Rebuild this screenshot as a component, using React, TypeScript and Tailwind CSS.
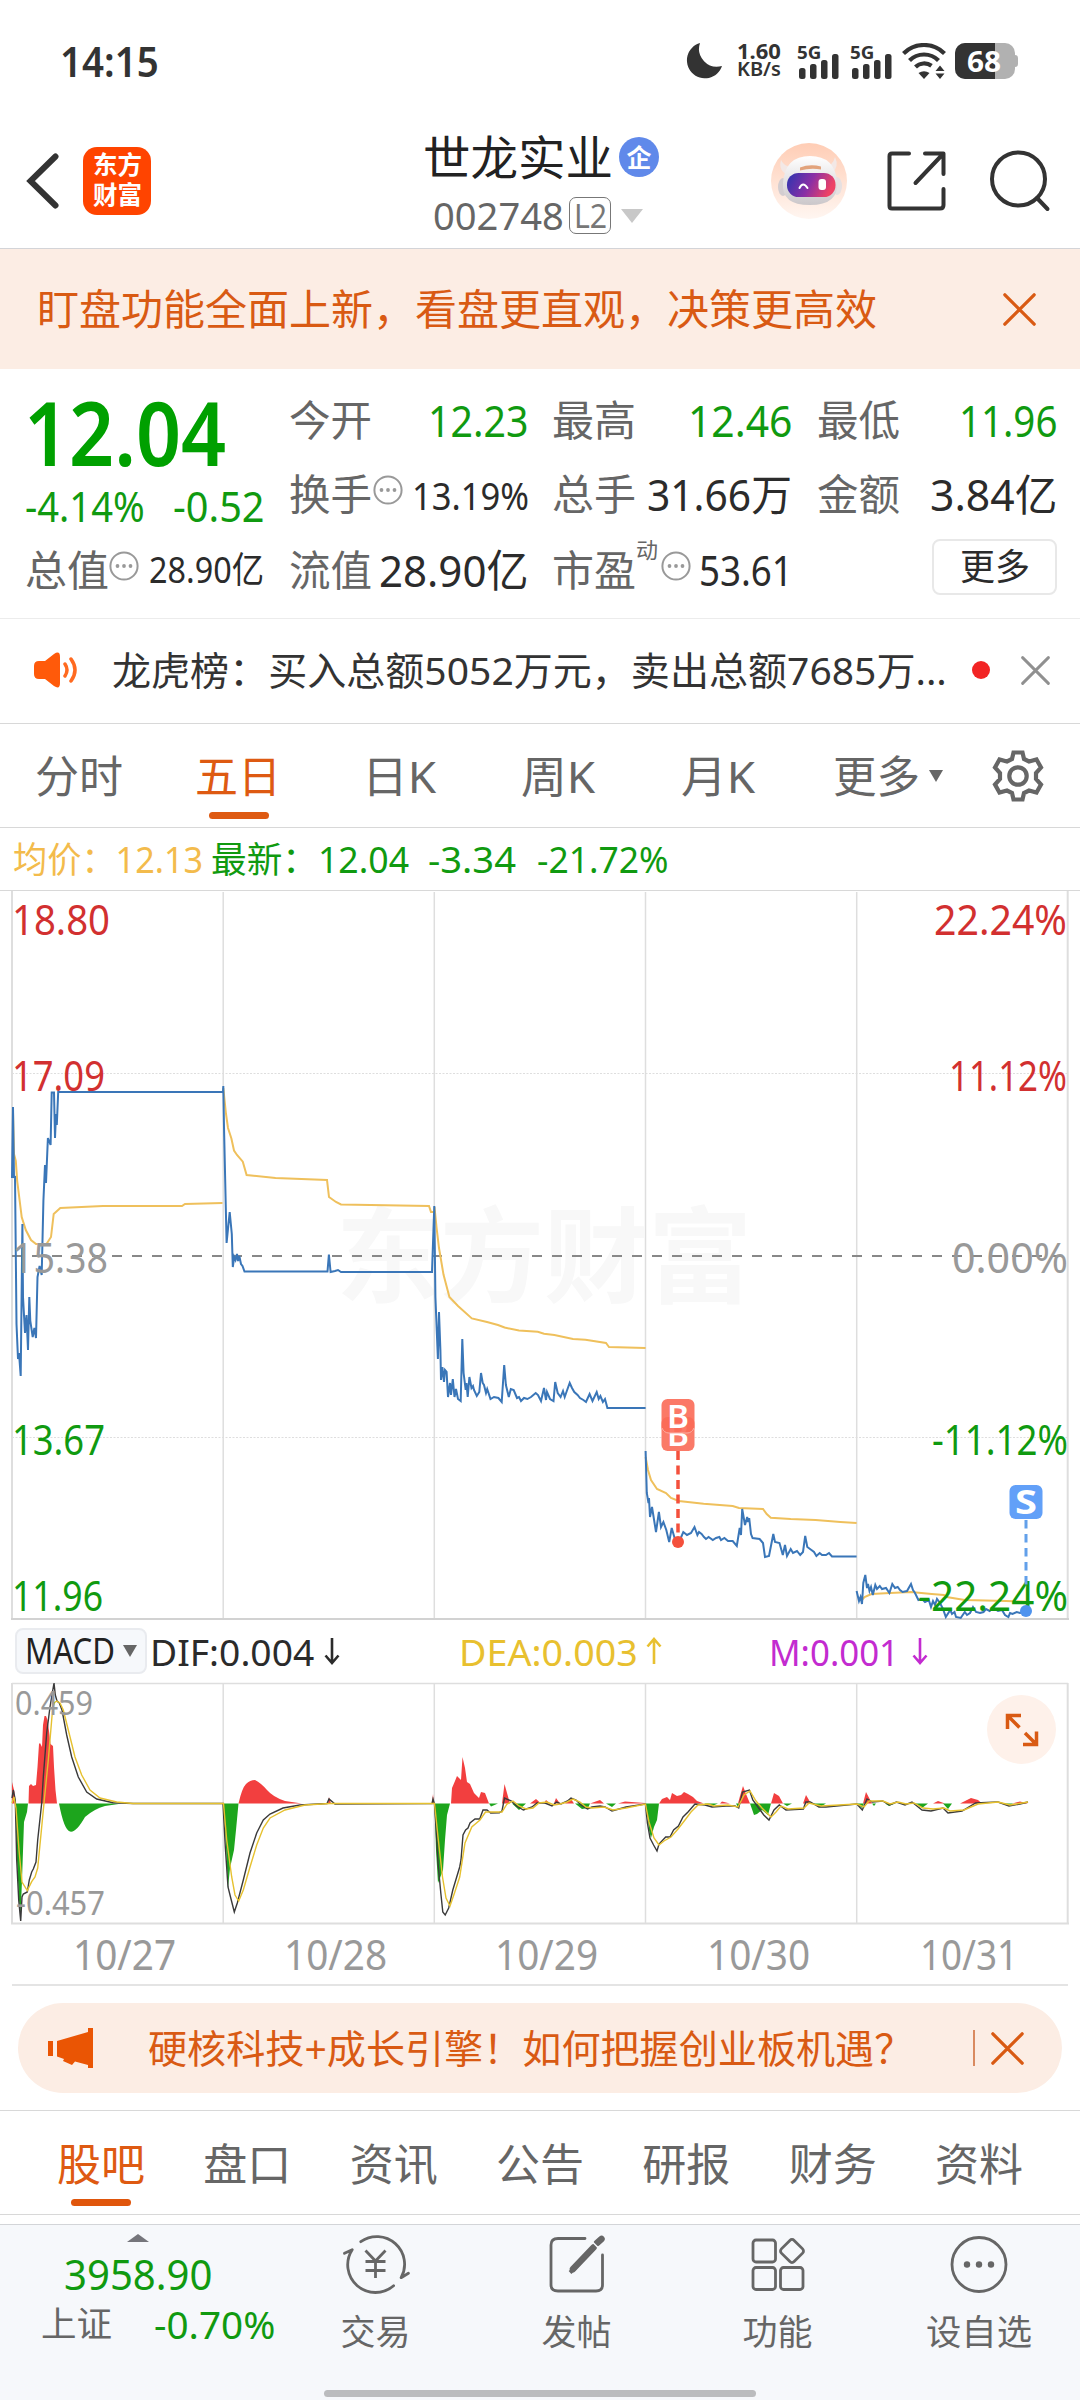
import React, { useLayoutEffect, useRef, useState } from 'react';

/** One line of text stretched or condensed to the width of its box. */
function Fit({ children, className = '' }: { children: React.ReactNode; className?: string }) {
  const box = useRef<HTMLDivElement>(null);
  const text = useRef<HTMLSpanElement>(null);
  const [scale, setScale] = useState(1);
  useLayoutEffect(() => {
    if (box.current && text.current && text.current.offsetWidth > 0) {
      setScale(box.current.clientWidth / text.current.offsetWidth);
    }
  }, [children]);
  return (
    <div ref={box} className={`shrink-0 whitespace-nowrap leading-none ${className}`}>
      <span ref={text} className="inline-block origin-left" style={{ transform: `scaleX(${scale})` }}>
        {children}
      </span>
    </div>
  );
}

function Cross({ className }: { className: string }) {
  return (
    <svg viewBox="0 0 32 32" className={className} fill="none" stroke="currentColor" strokeWidth="3.200" strokeLinecap="round">
      <path d="M1.8 1.8 30.2 30.2M30.2 1.8 1.8 30.2" />
    </svg>
  );
}

function Dots({ className = '' }: { className?: string }) {
  return (
    <svg viewBox="0 0 30 30" className={`relative -top-[4px] size-[30px] shrink-0 text-[#999] ${className}`} fill="none" stroke="currentColor" strokeWidth="2">
      <circle cx="15" cy="15" r="13.6" />
      <g fill="currentColor" stroke="none">
        <circle cx="8.5" cy="15" r="1.9" />
        <circle cx="15" cy="15" r="1.9" />
        <circle cx="21.5" cy="15" r="1.9" />
      </g>
    </svg>
  );
}

function Signal() {
  return (
    <div className="flex h-[36px] w-[42px] flex-col justify-between">
      <Fit className="h-[14px] w-[24px] text-[18px] font-bold leading-[14px]">5G</Fit>
      <svg viewBox="0 0 40 25" className="-mt-[4px] ml-[2px] h-[25px] w-[40px]" fill="#333">
        <rect x="0" y="14" width="6.5" height="11" rx="2.5" />
        <rect x="11" y="10" width="6.5" height="15" rx="2.5" />
        <rect x="22" y="6" width="6.5" height="19" rx="2.5" />
        <rect x="33" y="0" width="6.5" height="25" rx="2.5" />
      </svg>
    </div>
  );
}

function StatusBar() {
  return (
    <div className="flex h-[90px] items-center pl-[60px] pt-[31px] text-[#333]">
      <Fit className="w-[99px] text-[42px] font-semibold">14:15</Fit>
      <svg viewBox="0 0 36 36" className="ml-[527px] size-[36px]" fill="#333">
        <path d="M14 0A18 18 0 1 0 36 23 18 18 0 0 1 14 0Z" />
      </svg>
      <div className="ml-[15px] flex flex-col">
        <Fit className="h-[18px] w-[44px] text-[21px] font-bold leading-[18px]">1.60</Fit>
        <Fit className="h-[21px] w-[44px] text-[20px] font-semibold leading-[23px]">KB/s</Fit>
      </div>
      <div className="ml-[16px]"><Signal /></div>
      <div className="ml-[11px]"><Signal /></div>
      <svg viewBox="0 0 44 36" className="ml-[10px] h-[36px] w-[44px]" fill="none" stroke="#333" strokeWidth="4.2">
        <path d="M1.5 10.5a29 29 0 0 1 41 0" />
        <path d="M7.5 17.5a20.5 20.5 0 0 1 29 0" />
        <path d="M13.5 24a12.5 12.5 0 0 1 16-1.200" />
        <path d="M16.500 30q5.500-3.600 11 0L22 36Z" fill="#333" stroke="none" />
        <path d="M33.500 28h9L38 22.500ZM33.500 30.500h9L38 36Z" fill="#333" stroke="none" />
      </svg>
      <div className="relative ml-[9px] flex h-[36px] w-[60px] items-center overflow-hidden rounded-[10px] bg-[#b1b1b1]">
        <div className="h-full w-[40px] bg-[#333]" />
        <div className="absolute inset-0 flex items-center pl-[12px]">
          <Fit className="w-[34px] text-[28px] font-bold text-white">68</Fit>
        </div>
      </div>
      <div className="h-[12px] w-[3px] rounded-r-[3px] bg-[#b1b1b1]" />
    </div>
  );
}

function Robot() {
  return (
    <svg viewBox="0 0 76 76" className="size-[76px]">
      <defs>
        <linearGradient id="halo" x1="0" y1="0" x2="0" y2="1">
          <stop offset="0" stopColor="#ffcdb5" />
          <stop offset="1" stopColor="#fff6f1" />
        </linearGradient>
        <linearGradient id="visor" x1="0" y1="0" x2="1" y2="0.250">
          <stop offset="0" stopColor="#2b35b0" />
          <stop offset="0.550" stopColor="#8a2fa5" />
          <stop offset="1" stopColor="#ee4266" />
        </linearGradient>
        <linearGradient id="helmet" x1="0" y1="0" x2="0" y2="1">
          <stop offset="0" stopColor="#ffffff" />
          <stop offset="1" stopColor="#cbc7ca" />
        </linearGradient>
      </defs>
      <circle cx="38" cy="38" r="38" fill="url(#halo)" />
      <path d="M10 17q-3 11 7 15l6-8q-9 1-13-7ZM64 14q5 10-4 17l-7-7q9-1 11-10Z" fill="#f3e8e6" />
      <ellipse cx="12" cy="44" rx="5" ry="9" fill="#d3cdd0" />
      <ellipse cx="66" cy="43" rx="5" ry="9" fill="#e6e0e1" />
      <path d="M12 40Q14 13 39 13T66 39Q68 62 39 62T12 40Z" fill="url(#helmet)" />
      <path d="M29 24.500q10-4 21-1v3q-10-2-21 1Z" fill="#e2a37c" />
      <rect x="16" y="30" width="48.500" height="24" rx="11.500" fill="url(#visor)" />
      <path d="M28.500 45q3.500-7 8 0" fill="none" stroke="#fff" strokeWidth="2" strokeLinecap="round" />
      <rect x="47.500" y="36" width="7.500" height="11" rx="3" fill="#fff" />
    </svg>
  );
}

function Header() {
  return (
    <div className="flex h-[159px] items-center border-b border-[#d3d4d8] pl-[26px] pt-[24px]">
      <svg viewBox="0 0 33 56" className="h-[56px] w-[33px]" fill="none" stroke="#333" strokeWidth="6" strokeLinecap="round">
        <path d="M29.500 3.500 4.500 28 29.500 52.500" />
      </svg>
      <div className="ml-[24px] flex h-[68px] w-[68px] flex-col items-center justify-center rounded-[14px] bg-[#ff4400] text-[25px] font-bold text-white">
        <Fit className="h-[30px] w-[49px] leading-[28px]">东方</Fit>
        <Fit className="h-[28px] w-[49px] leading-[28px]">财富</Fit>
      </div>
      <div className="ml-[272px] flex h-[134px] w-[240px] flex-col">
        <div className="flex h-[86px] items-center">
          <Fit className="w-[190px] text-[47px] text-[#222]">世龙实业</Fit>
          <div className="ml-[6px] flex size-[40px] items-center justify-center rounded-full bg-[#6089ea] text-[25px] font-bold leading-none text-white">企</div>
        </div>
        <div className="flex h-[31px] items-center pl-[10px]">
          <Fit className="-mt-[2px] w-[131px] text-[39px] text-[#666]">002748</Fit>
          <div className="ml-[5px] flex h-[37px] w-[42px] items-center justify-center rounded-[7px] border-[1.5px] border-[#777]">
            <Fit className="w-[33px] text-[33px] text-[#777]">L2</Fit>
          </div>
          <div className="ml-[10px] h-0 w-0 border-x-[11px] border-t-[14px] border-x-transparent border-t-[#c8c8c8]" />
        </div>
      </div>
      <div className="ml-[108px]"><Robot /></div>
      <svg viewBox="0 0 60 60" className="ml-[40px] size-[60px]" fill="none" stroke="#333" strokeWidth="4" strokeLinecap="round" strokeLinejoin="round">
        <path d="M22 2.500H5Q2.500 2.500 2.500 5V55Q2.500 57.500 5 57.500H53Q56.500 57.500 56.500 54V38M38 2.500H56.500V23M56 3 28.500 32" />
      </svg>
      <svg viewBox="0 0 62 62" className="ml-[42px] size-[62px]" fill="none" stroke="#333" strokeWidth="4" strokeLinecap="round">
        <circle cx="29.500" cy="29" r="26.500" />
        <path d="M48 48 58.500 59" />
      </svg>
    </div>
  );
}

function Quote() {
  const label = 'text-[42px] text-[#666]';
  return (
    <div className="flex h-[250px] border-b border-[#ececec] pl-[26px] text-[#2b2b2b]">
      <div className="flex w-[240px] flex-col pt-[18px]">
        <div className="flex h-[88px] items-center">
          <Fit className="-ml-[2px] w-[202px] text-[89px] font-semibold text-[#00a000]">12.04</Fit>
        </div>
        <div className="mt-[2px] flex h-[58px] items-center justify-between text-[#109a10]">
          <Fit className="-ml-[1px] w-[120px] text-[41px]">-4.14%</Fit>
          <Fit className="mr-[1px] w-[92px] text-[41px]">-0.52</Fit>
        </div>
        <div className="flex h-[70px] items-center">
          <Fit className={`-ml-px w-[84px] ${label}`}>总值</Fit>
          <Dots />
          <Fit className="ml-[10px] w-[115px] text-[36px]">28.90亿</Fit>
        </div>
      </div>
      <div className="ml-[23px] flex w-[239px] flex-col pt-[13px]">
        <div className="flex h-[75px] items-center justify-between">
          <Fit className={`w-[83px] ${label}`}>今开</Fit>
          <Fit className="w-[100px] text-[44px] text-[#109a10]">12.23</Fit>
        </div>
        <div className="flex h-[74px] items-center">
          <Fit className={`w-[83px] ${label}`}>换手</Fit>
          <Dots className="ml-[1px]" />
          <Fit className="ml-[9px] w-[117px] text-[39px]">13.19%</Fit>
        </div>
        <div className="flex h-[78px] items-center justify-between">
          <Fit className={`w-[83px] ${label}`}>流值</Fit>
          <Fit className="w-[149px] text-[44px]">28.90亿</Fit>
        </div>
      </div>
      <div className="ml-[24px] flex w-[240px] flex-col pt-[13px]">
        <div className="flex h-[75px] items-center justify-between">
          <Fit className={`w-[84px] ${label}`}>最高</Fit>
          <Fit className="w-[104px] text-[44px] text-[#109a10]">12.46</Fit>
        </div>
        <div className="flex h-[74px] items-center justify-between">
          <Fit className={`w-[84px] ${label}`}>总手</Fit>
          <Fit className="w-[145px] text-[43px]">31.66万</Fit>
        </div>
        <div className="flex h-[78px] items-center">
          <Fit className={`w-[84px] ${label}`}>市盈</Fit>
          <Fit className="relative -top-[21px] w-[22px] text-[22px] text-[#666]">动</Fit>
          <Dots className="ml-[3px]" />
          <Fit className="ml-[8px] w-[94px] text-[41px]">53.61</Fit>
        </div>
      </div>
      <div className="ml-[25px] flex w-[240px] flex-col pt-[13px]">
        <div className="flex h-[75px] items-center justify-between">
          <Fit className={`w-[83px] ${label}`}>最低</Fit>
          <Fit className="w-[98px] text-[44px] text-[#109a10]">11.96</Fit>
        </div>
        <div className="flex h-[74px] items-center justify-between">
          <Fit className={`w-[83px] ${label}`}>金额</Fit>
          <Fit className="w-[127px] text-[43px]">3.84亿</Fit>
        </div>
        <div className="flex h-[78px] items-center justify-end">
          <div className="-mt-[6px] flex h-[56px] w-[125px] items-center justify-center rounded-[8px] border-2 border-[#e8e8e8]">
            <Fit className="w-[70px] text-[36px]">更多</Fit>
          </div>
        </div>
      </div>
    </div>
  );
}

function News() {
  return (
    <div className="flex h-[105px] items-center border-b border-[#d8d8d8] pl-[33px]">
      <svg viewBox="0 0 46 36" className="-mt-[2px] h-[36px] w-[46px]" fill="#ff5a0a">
        <path d="M1 14Q1 9 6 9H12L21 2Q27-2 27 5V31Q27 38 21 34L12 27H6Q1 27 1 22Z" />
        <path d="M32 12q4 6 0 12M38 7q8 11 0 22" fill="none" stroke="#ff6a20" strokeWidth="3.500" strokeLinecap="round" />
      </svg>
      <Fit className="-mt-[3px] ml-[33px] w-[835px] text-[39px] text-[#333]">龙虎榜：买入总额5052万元，卖出总额7685万...</Fit>
      <div className="-mt-[2px] ml-[25px] size-[18px] rounded-full bg-[#f22424]" />
      <Cross className="-mt-[2px] ml-[31px] size-[29px] text-[#909090]" />
    </div>
  );
}

function PeriodTabs() {
  return (
    <div className="flex h-[104px] items-center border-b border-[#d8d8d8] pl-[35px] text-[44px] text-[#666]">
      <Fit className="w-[88px]">分时</Fit>
      <div className="relative ml-[72px] text-[#de5a12]">
        <Fit className="w-[86px]">五日</Fit>
        <div className="absolute -bottom-[21px] left-[14px] h-[7px] w-[60px] rounded-full bg-[#de5a12]" />
      </div>
      <Fit className="ml-[81px] w-[74px]">日K</Fit>
      <Fit className="ml-[85px] w-[74px]">周K</Fit>
      <Fit className="ml-[86px] w-[74px]">月K</Fit>
      <Fit className="ml-[78px] w-[87px]">更多</Fit>
      <div className="ml-[9px] h-0 w-0 border-x-[7.5px] border-t-[12px] border-x-transparent border-t-[#666]" />
      <svg viewBox="-26 -26 52 52" className="ml-[49px] size-[52px]" fill="none" stroke="#666" strokeWidth="4.200">
        <circle r="8.700" />
        <path d="M-4.500-23.500H4.500L6-17 11-14.500 18.500-16.500 23-8.500 18-3V3L23 8.500 18.500 16.500 11 14.500 6 17 4.500 23.500H-4.500L-6 17-11 14.500-18.500 16.500-23 8.500-18 3V-3L-23-8.500-18.500-16.500-11-14.500-6-17Z" />
      </svg>
    </div>
  );
}

function Averages() {
  return (
    <div className="flex h-[63px] items-center border-b border-[#d8d8d8] pl-[13px] pt-[2px] text-[36px] text-[#109a10]">
      <Fit className="w-[190px] text-[#f3bb4c]">均价：12.13</Fit>
      <Fit className="ml-[8px] w-[198px]">最新：12.04</Fit>
      <Fit className="ml-[19px] w-[88px]">-3.34</Fit>
      <Fit className="ml-[21px] w-[132px]">-21.72%</Fit>
    </div>
  );
}

const price = [
  '12,1178 13,1107 14,1178 15,1176 16.5,1324 18,1359 19,1353 20.7,1376 22.4,1224 23,1297 25,1333 26.5,1315 28,1350 29.3,1297 30.3,1321 32.7,1337 34.4,1328 36,1338 37.5,1277 39.6,1266 41.7,1275 43.4,1201 45,1165 46,1183 47.9,1138 50.6,1145 51.7,1092.5 54,1092.5 55,1138 56,1114 56.8,1125 58.2,1092 223,1092 223.3,1086 224,1127 226.6,1243 229.7,1212 231.8,1234 232.8,1267 234.2,1257 235.5,1260 237,1254 238,1261 239.3,1256 241,1264 242.5,1266 244.5,1271.5 327.5,1271.5 328.9,1254.5 330.6,1272 335,1271 338,1270 341,1272 432,1272 433,1243 434.3,1206 435.4,1297 437.9,1359 439,1312 440.4,1350 441,1380 442.4,1367 444,1382 445,1370 446.6,1372 448,1397 450,1383 451,1395 452.8,1379 454.5,1397 456,1389 458,1399 460.7,1401 462.3,1339 463.6,1373 465.7,1390 466.500,1383 467.7,1397 469.4,1377 471.5,1388 473,1386 474,1390 476.8,1396 479.3,1392 481,1373 482.7,1383 484,1385 486,1393 487.2,1389 490.5,1399 494,1397 498.4,1398 501.7,1402 504.2,1365 505.9,1385 508.8,1397 510.8,1389 513.7,1390 517,1398 519,1397 521,1401 524,1398 527.4,1399 531,1397 535.7,1393 538,1395 541,1401 544,1388 546,1400 547,1392 550,1399 553.5,1401 555.2,1382 557.7,1393 560.6,1397 563,1391 564.7,1397 566.8,1391 569.7,1383 572,1388 574.3,1392 577.6,1395 580,1398 583.4,1400 586,1402 589.6,1394 592.5,1401 596.7,1392 598.7,1399 600.4,1396 602.9,1402 605,1399 607.4,1408 645.6,1408',
  '645.6,1451 646.8,1493 648.5,1503 649,1498 650,1517 652,1507 656,1532 658.9,1512 661,1527 663.4,1522 666.3,1530 669.2,1542 671.7,1528 674.6,1538 678,1542 680.8,1538 683.3,1532 687,1535 691,1533 694.5,1527 697.4,1535 699,1532 701.6,1534 704,1537 706,1539 708.6,1537 712.8,1540 716,1538 719.4,1537 721,1540 724.4,1538 728,1541 732.7,1541 736.8,1546 739.7,1528 741,1535 742.2,1509 745,1525 747.2,1517 748,1522 749.2,1518 751,1534 752.6,1538 759.6,1539 763,1543 765,1557 769,1556 773.3,1534 775,1542 779.5,1543 782.8,1555 785,1545 787,1556 790.7,1549 793,1553 797,1551 800.2,1555 803,1552 805.2,1536 807.3,1547 811.4,1550 814,1552 816.4,1556 819.7,1553 822,1555 826,1555 829,1553 832,1556.5 856.6,1556.5',
  '856.6,1591 859,1601 860.5,1597 862,1604 863.3,1583 865.3,1575 867,1588 868,1584 869.5,1591 871,1587 872.8,1595 875.3,1585 877,1589 879.8,1586 882,1589 886,1588 889.4,1593 892.3,1584 895,1588 897.7,1587 900,1590 902.6,1592 907,1591 911,1584 913,1590 915,1593 918.4,1600 922,1599 925,1602 928.8,1600 931,1607 933,1601 935,1605 937,1599 940,1603 943,1609 945.8,1617 950.3,1610 952,1614 954.5,1612 956,1617 960.7,1618 964.8,1612 967,1615 970,1613 973,1607 976,1612 980,1613 983.5,1612 986,1609 989.7,1611 993,1608 998,1611 1002,1610 1005,1615 1008.4,1617 1010,1613 1012.5,1614 1016.7,1612 1020,1613 1025.8,1611',
];

const average = [
  '13,1112 14,1154 15.8,1161 17.2,1181 21.7,1217 25.8,1230 31,1240 36,1244 46.5,1244 51,1237 53.7,1214 60.3,1208 103,1206 182,1206 185,1204 222.5,1203',
  '223.3,1088 226,1114 228,1128 231.4,1138.5 234,1150.5 237,1155 242.8,1161.7 246.6,1175 275.5,1178 327,1180 329,1197 336,1202 341,1204.5 429,1206 431,1212 434,1212',
  '434.5,1207 436.6,1228 439,1248 443.5,1274.6 449.4,1297 458,1306 471.8,1318.4 487,1322 498,1325 504.6,1327.500 519,1330.6 537.8,1331.7 544,1333.7 554.4,1335 573,1339 585.5,1339.7 606,1343 609,1347 645.6,1348',
  '645.6,1457 648,1470 651,1480 657,1489 666,1493 671,1498 678.8,1501 703.6,1503.7 732.7,1506 739,1508 763,1509 766.7,1514 770.8,1517.7 790.7,1519 815.6,1520 840.4,1522 856.6,1523',
  '861,1601 864.5,1597 871.5,1594 890,1593 911,1592 931.7,1594 944,1595 946.6,1597 964.8,1600 1006,1601 1025.8,1601.7',
];

type Mark = { t: string; x: number; y: number; w: number; c: string };
const axis: Mark[] = [
  { t: '18.80', x: 12, y: 934.5, w: 98, c: '#d23030' },
  { t: '17.09', x: 12, y: 1090.5, w: 93, c: '#d23030' },
  { t: '15.38', x: 12, y: 1272.5, w: 96, c: '#999' },
  { t: '13.67', x: 12, y: 1454.5, w: 93, c: '#109a10' },
  { t: '11.96', x: 12, y: 1610.5, w: 91, c: '#109a10' },
  { t: '22.24%', x: 934, y: 934.5, w: 133, c: '#d23030' },
  { t: '11.12%', x: 949, y: 1090.5, w: 118, c: '#d23030' },
  { t: '0.00%', x: 952, y: 1272.5, w: 116, c: '#999' },
  { t: '-11.12%', x: 932, y: 1454.5, w: 136, c: '#109a10' },
  { t: '-22.24%', x: 918, y: 1610.5, w: 150, c: '#109a10' },
];

function PriceChart() {
  return (
    <svg viewBox="0 891 1080 729" className="block h-[729px] w-[1080px]" fill="none">
      <text x="336" y="1295" fontSize="104" fontWeight="700" textLength="416" lengthAdjust="spacingAndGlyphs" fill="#f8f8f8">东方财富</text>
      <g stroke="#dedede" strokeWidth="1.500">
        <path d="M12 891V1619M1067.700 891V1619" strokeWidth="2" />
        <path d="M223.200 892V1619M434.300 892V1619M645.500 892V1619M856.700 892V1619" />
        <path d="M12 1073.500H1068M12 1437.500H1068" strokeWidth="1" strokeDasharray="2 1.500" />
        <path d="M11 1619H1069" stroke="#d2d2d2" strokeWidth="2" />
      </g>
      <path d="M12 1256H1068" stroke="#888" strokeWidth="1.800" strokeDasharray="10 10" />
      {average.map((p) => (
        <polyline key={p} points={p} stroke="#efc05c" strokeWidth="2" />
      ))}
      {price.map((p) => (
        <polyline key={p} points={p} stroke="#3a76b8" strokeWidth="2" />
      ))}
      <g stroke="#f4503c" strokeWidth="3.500">
        <path d="M678 1451V1540" strokeDasharray="9 5.500" />
        <circle cx="678" cy="1542" r="6" fill="#f4503c" stroke="none" />
      </g>
      <rect x="661.500" y="1417" width="33" height="34" rx="6" fill="#fa7a68" />
      <text x="667" y="1446" fontSize="33" fontWeight="600" textLength="22" lengthAdjust="spacingAndGlyphs" fill="#fff">B</text>
      <rect x="661.500" y="1399" width="33" height="34" rx="6" fill="#fb6a57" fillOpacity="0.900" />
      <path d="M662 1428q2 5 7 5h18q5 0 7-5" stroke="#fbb0a5" strokeWidth="1" />
      <text x="667" y="1428" fontSize="33" fontWeight="600" textLength="22" lengthAdjust="spacingAndGlyphs" fill="#fff">B</text>
      {axis.map((m) => (
        <text key={m.t + m.x} x={m.x} y={m.y} fontSize="41.500" textLength={m.w} lengthAdjust="spacingAndGlyphs" fill={m.c}>
          {m.t}
        </text>
      ))}
      <rect x="1009.500" y="1485" width="33" height="34" rx="6" fill="#62a0f8" />
      <text x="1015" y="1514" fontSize="34" fontWeight="700" textLength="22" lengthAdjust="spacingAndGlyphs" fill="#fff">S</text>
      <path d="M1026 1520V1585" stroke="#62a0ea" strokeWidth="3" strokeDasharray="8.500 5.500" />
      <circle cx="1026" cy="1611" r="6" fill="#4f93ee" />
    </svg>
  );
}

function Arrow({ className }: { className: string }) {
  return (
    <svg viewBox="0 0 16 28" className={`h-[28px] w-[16px] ${className}`} fill="none" stroke="currentColor" strokeWidth="2.600">
      <path d="M8 1V26M1.500 18.500 8 26 14.500 18.500" />
    </svg>
  );
}

function MacdLegend() {
  return (
    <div className="flex h-[62px] items-center pl-[15px] text-[37px]">
      <div className="flex h-[46px] w-[132px] items-center rounded-[8px] border-2 border-[#e9ebef] bg-[#f6f8fb] pl-[8px] text-[#222]">
        <Fit className="w-[90px] text-[36px]">MACD</Fit>
        <div className="ml-[8px] h-0 w-0 border-x-[7.5px] border-t-[12px] border-x-transparent border-t-[#666]" />
      </div>
      <Fit className="ml-[3px] w-[164px] text-[#2b2b2b]">DIF:0.004</Fit>
      <Arrow className="ml-[10px] text-[#2b2b2b]" />
      <Fit className="ml-[119px] w-[179px] text-[#e8c02f]">DEA:0.003</Fit>
      <Arrow className="ml-[8px] rotate-180 text-[#e8c02f]" />
      <Fit className="ml-[107px] w-[130px] text-[#c32bd0]">M:0.001</Fit>
      <Arrow className="ml-[13px] text-[#c32bd0]" />
    </div>
  );
}

const redBars = [
  'M12 1803.500V1782L13 1786 14.500 1792V1803.500Z',
  'M28.500 1803.500 29 1786 31 1784 33 1786 36 1785 37.500 1767 39 1744 40 1743 42 1747 43 1725 44.500 1716 46 1716 47.500 1720 49 1731 50.500 1744 53 1746 54 1767 55.500 1790 57 1803.500Z',
  'M238.500 1803.500Q242 1788 246 1784T255 1780Q261 1783 267 1790T285 1801L302 1803.500Z',
  'M328 1803.500 329 1797 331 1803.500ZM432 1803.500 433 1794 434 1803.500Z',
  'M451 1803.500 452 1788 455 1781 457 1776 461 1780 462.500 1757 465 1768 467 1782 470 1784 474 1793 479 1798 481 1792 485 1793 489 1803.500Z',
  'M502 1803.500 504.500 1784 507 1793 510 1803.500ZM530 1803.500 536 1799 541 1803.500ZM544 1803.500 546 1800 550 1803.500ZM554 1803.500 556 1798 560 1803.500ZM565 1803.500 571 1799 574 1803.500ZM590 1803.500 600 1800 604 1803.500ZM618 1803.500 625 1801.500 645 1803V1803.500Z',
  'M659 1803.500 662 1799 667 1797 670 1800 672 1793 677 1796 681 1795 684 1792 688 1794 693 1797 697 1801 704 1803.500ZM720 1803.500 722 1801.500 730 1803.500Z',
  'M738 1803.500 740 1796 743 1786 746 1794 750 1803.500ZM771 1803.500 774 1793 779 1796 783 1803.500ZM803 1803.500 806 1795 811 1803.500ZM863 1803.500 866 1792 872 1803.500ZM933 1803.500 938 1801 945 1803.500ZM960 1803.500 971 1798 978 1800 982 1803.500ZM1012 1803.500 1020 1801.500 1028 1803.500Z',
];

const greenBars = [
  'M15.500 1803.500 17 1860 19 1900 20.500 1918 22 1880 24 1822 27 1812 28 1803.500Z',
  'M59 1803.500Q64 1830 70 1831.500T85 1817Q94 1809 105 1806L122 1803.500Z',
  'M223.500 1803.500 226 1847 228 1888 230 1868 234 1850 236 1830 238.500 1803.500Z',
  'M434.500 1803.500 436 1850 438 1883 440 1878 443 1870 445 1840 447 1815 450 1803.500Z',
  'M489 1803.500 491 1806.500 498 1803.500ZM512 1803.500 519 1810 526 1803.500ZM575 1803.500 582 1809 588 1808 590 1803.500ZM606 1803.500 612 1807 616 1803.500Z',
  'M646 1803.500 649 1830 651 1838 654 1827 657 1820 659 1803.500ZM704 1803.500 712 1806 718 1803.500ZM736 1803.500 738 1807 740 1803.500ZM750 1803.500 754 1815 757 1814 762 1810 768 1815 771 1803.500ZM783 1803.500 787 1806 792 1803.500ZM812 1803.500 820 1807 826 1803.500Z',
  'M857 1803.500 862 1808 864 1803.500ZM872 1803.500 874 1806 876 1803.500ZM885 1803.500 889 1806 895 1803.500ZM915 1803.500 922 1808 928 1803.500ZM943 1803.500 948 1809 952 1803.500ZM1003 1803.500 1009 1806 1013 1803.500Z',
];

const calm =
  '545,1803 552,1806 556.5,1802 561,1804 567.5,1801 571,1798 576,1800 581,1805 587.5,1809 592,1807 600,1806 605,1807 612,1811 626,1807 645.4,1804';

const calmTail =
  '712,1807 726,1806 735,1806 738.7,1808 742.5,1792 749.4,1790 752.8,1800 758.7,1808 763.8,1815 769,1820 774,1810 779.3,1805 786,1810 803.4,1809 805.8,1802 810.3,1802 819,1807 826,1807 856.8,1804 862.3,1810 867,1799 872.3,1802 882.6,1801 889.5,1805 896.4,1802 905,1805 912,1802 922,1810 931,1811 943,1808 948,1813 962,1811 975.6,1803 998,1802 1009,1806 1020,1804 1028,1802';

const dif =
  '12,1798 13.3,1790 15.3,1800 16.7,1860 18.7,1900 20.7,1921 22,1897 23.3,1894 27.3,1892 29.3,1880 31.7,1872 33.3,1869 36,1862 37.7,1840 41.7,1803 43.3,1777 46.7,1733 50,1707 52.3,1693 54,1683 55.3,1695 57,1701 59.3,1703 62,1710 66.7,1735 71.7,1757 78.3,1777 86.7,1792 96.7,1799 113,1802.7 133,1803.5 223,1803.5 225.3,1847 228,1887 230,1895 234.3,1912 237.3,1903 243.3,1880 250,1853 256.7,1833 263.3,1820 270,1814 283,1808 300,1805 327,1803.5 329,1799 335,1804 432,1803.5 433,1799 434.5,1804 436,1827 438,1863 440.8,1893 442.8,1912 445.2,1915 448.7,1908 452.8,1890 459.7,1867 461,1860 463,1835 465.6,1830 468,1828 470,1823 475,1819 479.700,1819 483,1810 487,1810 490.7,1813 499.3,1812.7 502,1811 504.5,1798 511.4,1801 516.5,1806 523.4,1810 532,1807 537,1803 ' +
  calm +
  ' 647.4,1823 650,1838 653.6,1845 657,1851 659,1844 665.7,1837 670,1837 673.6,1830 678.4,1826 683,1817 688,1812 695,1804 705,1805 ' +
  calmTail;

const dea =
  '12,1803 14,1797 16,1808 19,1850 22,1882 27.3,1890.5 31.7,1881.7 35,1877 37.7,1868 41.7,1827 44.3,1800 48.3,1760 52.7,1708 54.3,1702.7 56.7,1701 60,1703 63.3,1710 68.3,1730 75,1757 81.7,1775 90,1790 100,1798 116.7,1802 133,1803.5 223.5,1803.5 226.7,1840 231.7,1877 235,1895 238.7,1901 243.3,1890 250,1867 256.7,1845 263.3,1828 270,1818 285,1810 305,1805 330,1803.5 434.5,1803.5 438,1837 442.5,1877 446,1898 450,1906 454.5,1893 459.7,1877 465,1843 471.8,1827 480,1820 485.5,1812 493,1812 502,1812 507,1804 513,1801 519,1806 526,1809 533,1808 539,1803 547,1802 554,1805 560,1804 567,1802 573,1799 580,1802 586,1807 592,1808 604,1807 613,1810 626,1808 645.4,1804 649,1822 654,1838 659,1845 664,1841 671,1837 678,1829 685,1820 691,1812 698,1805 708,1804 714,1806 728,1805 738,1807 744,1795 750,1791 756,1801 762,1808 771,1817 776,1812 781,1806 788,1809 804,1808 809,1803 821,1806 857,1804 864,1807 869,1801 883,1801 890,1804 898,1802 906,1804 914,1803 923,1808 933,1809 944,1808 950,1811 964,1810 978,1804 998,1802 1010,1805 1028,1802';

const dates = ['10/27', '10/28', '10/29', '10/30', '10/31'];

function MacdChart() {
  return (
    <div className="relative h-[243px]">
      <svg viewBox="0 1682 1080 243" className="block h-[243px] w-[1080px]" fill="none">
        <g stroke="#dedede" strokeWidth="1.500">
          <path d="M12 1683.500H1068M223.200 1683V1923M434.300 1683V1923M645.500 1683V1923M856.700 1683V1923" />
          <path d="M12 1683V1924M1067.700 1683V1924M11 1923.500H1069" strokeWidth="2" />
        </g>
        {redBars.map((d) => (
          <path key={d} d={d} fill="#f23f3f" />
        ))}
        {greenBars.map((d) => (
          <path key={d} d={d} fill="#1da51d" />
        ))}
        <polyline points={dif} stroke="#3a3a3a" strokeWidth="1.400" />
        <polyline points={dea} stroke="#e6c12f" strokeWidth="1.400" />
        <g fill="#999" fontSize="32">
          <text x="15" y="1715" textLength="78" lengthAdjust="spacingAndGlyphs">0.459</text>
          <text x="16" y="1915" textLength="89" lengthAdjust="spacingAndGlyphs">-0.457</text>
        </g>
      </svg>
      <div className="absolute left-[987px] top-[13px] flex size-[69px] items-center justify-center rounded-full bg-[#fef1ea]">
        <svg viewBox="0 0 34 34" className="size-[34px]" fill="none" stroke="#d95a13" strokeWidth="3.500">
          <path d="M2.500 16V2.500H16M3 3 14.500 14.500M31.500 18.500V31.500H18M31 31 20 20" />
        </svg>
      </div>
    </div>
  );
}

function Promo() {
  return (
    <div className="mx-[18px] mt-[17px] flex h-[90px] items-center rounded-full bg-[#fcede4] pl-[30px] text-[#d95a13]">
      <svg viewBox="0 0 46 40" className="h-[40px] w-[46px]" fill="#ea5504">
        <path d="M0 13H5V28H0ZM9 13 40 4V0H45V40H40V37L27 33.500 24 37 15 33 16 31 9 28.500Z" />
      </svg>
      <Fit className="-mt-[2px] ml-[54px] w-[765px] text-[39px]">硬核科技+成长引擎！如何把握创业板机遇？</Fit>
      <div className="ml-[60px] h-[36px] w-[1.500px] bg-[#d98a60]" />
      <Cross className="ml-[16px] size-[33px]" />
    </div>
  );
}

function SectionTabs() {
  const tabs = ['股吧', '盘口', '资讯', '公告', '研报', '财务', '资料'];
  return (
    <div className="mt-[17px] flex h-[105px] items-center justify-between border-y border-[#d8d8d8] pl-[57px] pr-[57px] pt-[3px] text-[44px] text-[#666]">
      {tabs.map((t, i) => (
        <div key={t} className={i === 0 ? 'relative text-[#de5a12]' : 'relative'}>
          <Fit className="w-[88px]">{t}</Fit>
          {i === 0 && <div className="absolute -bottom-[20px] left-[14px] h-[7px] w-[60px] rounded-full bg-[#e0560c]" />}
        </div>
      ))}
    </div>
  );
}

function NavItem({ width, label, children }: { width: string; label: string; children: React.ReactNode }) {
  return (
    <div className="flex w-[201px] flex-col items-center pt-[9px]">
      <svg viewBox="0 0 64 60" className="h-[60px] w-[64px] overflow-visible" fill="none" stroke="#666" strokeWidth="2.800" strokeLinecap="round" strokeLinejoin="round">
        {children}
      </svg>
      <Fit className={`mt-[20px] text-[35px] text-[#666] ${width}`}>{label}</Fit>
    </div>
  );
}

function BottomBar() {
  return (
    <div className="mt-[9px] h-[176px] border-t border-[#d3d5d8] bg-[#f6f8fb]">
      <div className="flex h-[165px]">
        <div className="flex w-[275px] flex-col items-center">
          <div className="mt-[9px] h-0 w-0 border-x-[11px] border-b-[8px] border-x-transparent border-b-[#75757b]" />
          <Fit className="mt-[11px] h-[43px] w-[148px] text-[42px] text-[#109a10]">3958.90</Fit>
          <div className="ml-[41px] flex h-[54px] w-[234px] items-center justify-between self-start">
            <Fit className="w-[71px] text-[35px] text-[#666]">上证</Fit>
            <Fit className="w-[121px] text-[39px] text-[#109a10]">-0.70%</Fit>
          </div>
        </div>
        <NavItem width="w-[70px]" label="交易">
          <path d="M16.800 7.700A27.700 27.700 0 0 1 57.100 43.700L64.400 39.300M49.600 51.700A27.700 27.700 0 0 1 8.200 15.700L0.500 19.300" />
          <path d="M21.500 16.500 31.500 27 41.500 16.500M21.500 27.500H41.500M21.500 36.500H41.500M31.500 27V44" strokeLinecap="butt" />
        </NavItem>
        <NavItem width="w-[70px]" label="发帖">
          <path d="M40 4.500H13Q6 4.500 6 11V51Q6 57 13 57H51Q57.500 57 57.500 51V21" />
          <path d="M52 9 56.500 5M48.500 13.500 28 35" strokeWidth="6.500" strokeLinecap="round" />
          <path d="M48.500 13.500 29 35 25 38.500" strokeWidth="4" strokeLinecap="butt" />
          <path d="M47.500 8 54 14.500" stroke="#f6f8fb" strokeWidth="1.500" />
        </NavItem>
        <NavItem width="w-[70px]" label="功能">
          <rect x="7" y="6" width="22.500" height="22" rx="3" />
          <rect x="7" y="33.500" width="22.500" height="22" rx="3" />
          <rect x="34.500" y="33.500" width="22.500" height="22" rx="3" />
          <rect x="37" y="8" width="18" height="18" rx="3" transform="rotate(45 46 17)" />
        </NavItem>
        <NavItem width="w-[106px]" label="设自选">
          <circle cx="32" cy="30.500" r="27" />
          <g fill="#666" stroke="none">
            <circle cx="20" cy="30.500" r="3.200" />
            <circle cx="32" cy="30.500" r="3.200" />
            <circle cx="44" cy="30.500" r="3.200" />
          </g>
        </NavItem>
      </div>
      <div className="mx-auto h-[7px] w-[432px] rounded-full bg-[#bbbcbe]" />
    </div>
  );
}

export default function App() {
  return (
    <div className="h-[2400px] w-[1080px] overflow-hidden bg-white font-['Noto_Sans','Noto_Sans_CJK_SC',sans-serif]">
      <StatusBar />
      <Header />
      <div className="flex h-[120px] items-center bg-[#fcede4] pl-[37px] text-[#d95a13]">
        <Fit className="w-[840px] text-[42px]">盯盘功能全面上新，看盘更直观，决策更高效</Fit>
        <Cross className="ml-[126px] size-[33px]" />
      </div>
      <Quote />
      <News />
      <PeriodTabs />
      <Averages />
      <PriceChart />
      <MacdLegend />
      <MacdChart />
      <div className="mx-[12px] grid h-[61px] grid-cols-5 items-center justify-items-center border-b-2 border-[#e4e4e4] text-[41px] text-[#999]">
        {dates.map((d) => (
          <Fit key={d} className="ml-[14px] w-[103px] last:w-[98px]">{d}</Fit>
        ))}
      </div>
      <Promo />
      <SectionTabs />
      <BottomBar />
    </div>
  );
}
